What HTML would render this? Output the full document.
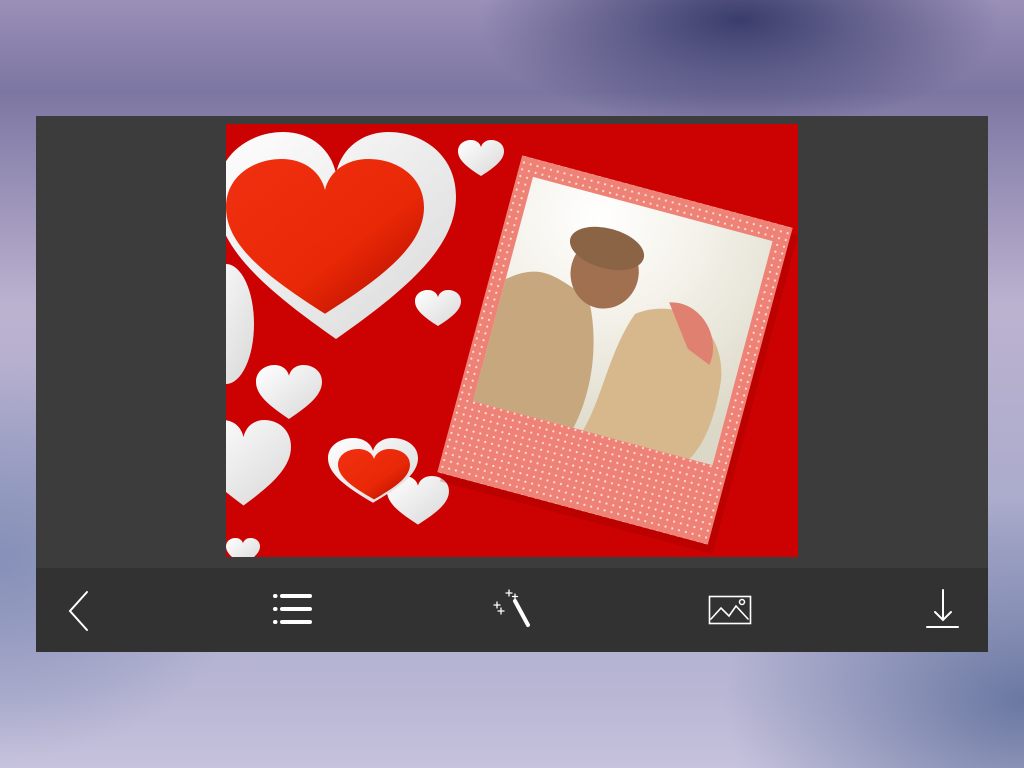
<!DOCTYPE html>
<html><head><style>
html,body{margin:0;padding:0;width:1024px;height:768px;overflow:hidden}
body{position:relative;background:
radial-gradient(ellipse 260px 110px at 740px 20px,#3a3d6c 0%,rgba(58,61,108,0) 100%),
radial-gradient(ellipse 300px 200px at 1024px 700px,#6a78a2 0%,rgba(106,120,162,0) 100%),
radial-gradient(ellipse 250px 200px at 0px 560px,#8690b8 0%,rgba(134,144,184,0) 100%),
linear-gradient(180deg,#9a90b8 0%,#7c76a2 12%,#bcb2d0 40%,#a8aacb 70%,#b8b6d4 90%,#c6c2dc 100%);}
#panel{position:absolute;left:36px;top:116px;width:952px;height:452px;background:#3c3c3c}
#bar{position:absolute;left:36px;top:568px;width:952px;height:84px;background:#323232}
#img{position:absolute;left:226px;top:124px;width:572px;height:433px;background:#cc0202;overflow:hidden}
</style></head><body>
<div id="panel"></div>
<div id="img">
<svg width="572" height="433" viewBox="0 0 572 433" style="position:absolute;left:0;top:0">
<defs>
<path id="h" d="M50,90 C20,68 0,50 0,28 C0,10 14,0 28,0 C40,0 48,8 50,18 C52,8 60,0 72,0 C86,0 100,10 100,28 C100,50 80,68 50,90 Z"/>
<linearGradient id="wg" x1="0" y1="0" x2="1" y2="1"><stop offset="0" stop-color="#ffffff"/><stop offset="1" stop-color="#d8d8d8"/></linearGradient>
<linearGradient id="rg" x1="0" y1="0" x2="1" y2="1"><stop offset="0" stop-color="#f03010"/><stop offset="0.6" stop-color="#e82806"/><stop offset="1" stop-color="#b00800"/></linearGradient>
<radialGradient id="ph" cx="0.3" cy="0.1" r="1"><stop offset="0" stop-color="#ffffff"/><stop offset="0.4" stop-color="#f4f2ea"/><stop offset="1" stop-color="#dcd8c8"/></radialGradient>
<pattern id="dots" width="7" height="7" patternUnits="userSpaceOnUse"><rect width="7" height="7" fill="#ee8276"/><circle cx="3.5" cy="3.5" r="1.1" fill="#fde0d8"/></pattern>
</defs>
<ellipse cx="0" cy="200" rx="28" ry="60" fill="url(#wg)"/>
<use href="#h" transform="translate(-10,8) scale(2.4,2.3)" fill="url(#wg)"/>
<use href="#h" transform="translate(0,35) scale(1.98,1.72)" fill="url(#rg)"/>
<use href="#h" transform="translate(232,16) scale(0.46,0.4)" fill="url(#wg)"/>
<use href="#h" transform="translate(189,166) scale(0.46,0.4)" fill="url(#wg)"/>
<use href="#h" transform="translate(30,241) scale(0.66,0.6)" fill="url(#wg)"/>
<use href="#h" transform="translate(-30,296) scale(0.95,0.95)" fill="url(#wg)"/>
<use href="#h" transform="translate(161,352) scale(0.62,0.54)" fill="url(#wg)"/>
<use href="#h" transform="translate(102,314) scale(0.9,0.72)" fill="url(#wg)"/>
<use href="#h" transform="translate(112,325) scale(0.72,0.56)" fill="url(#rg)"/>
<use href="#h" transform="translate(0,414) scale(0.34,0.3)" fill="url(#wg)"/>
<g transform="translate(389,226) rotate(15)">
<rect x="-138" y="-162" width="282" height="330" fill="#8a0000" opacity="0.25" transform="translate(3,4)"/>
<rect x="-140" y="-164" width="280" height="328" fill="url(#dots)"/>
<rect x="-124" y="-146" width="248" height="232" fill="url(#ph)"/>
<path d="M-124,-40 C-90,-70 -70,-50 -40,-45 C-20,-10 -10,40 -20,86 L-124,86 Z" fill="#c7a77e"/>
<ellipse cx="-30" cy="-72" rx="34" ry="36" fill="#a07050"/>
<ellipse cx="-34" cy="-96" rx="38" ry="20" fill="#8a6444"/>
<path d="M10,-40 C50,-70 100,-50 110,0 C115,40 110,70 100,86 L-10,86 C0,50 -5,0 10,-40Z" fill="#d6b88c"/>
<path d="M40,-60 C70,-70 100,-40 95,-10 L70,-20 Z" fill="#e08070"/>
</g>
</svg>
</div>
<div id="bar">
<svg width="952" height="84" viewBox="0 0 952 84" style="position:absolute;left:0;top:0" fill="none" stroke="#fff" stroke-width="2" stroke-linecap="round">
<path d="M51,24 L34,43 L51,62"/>
<g stroke-width="4"><path d="M246,28h28M246,41h28M246,54h28"/><path d="M239,28h0.5M239,41h0.5M239,54h0.5"/></g>
<path d="M479,33 L492,57" stroke-width="4"/>
<g stroke-width="1.3"><path d="M473,22v6M470,25h6M479,26v5M476.5,28.5h5M461,34v6M458,37h6M465,40v6M462,43h6"/></g>
<rect x="673.5" y="28.5" width="41" height="27" stroke-width="1.6"/>
<path d="M675,51 L685,40 L693,48 L700,38 L712,51" stroke-width="1.6"/>
<circle cx="706" cy="34" r="2.5" stroke-width="1.5"/>
<path d="M907,22 V52 M899,44 L907,52 L915,44" stroke-width="2"/>
<path d="M891,59 H922" stroke-width="2"/>
</svg>
</div>
</body></html>
